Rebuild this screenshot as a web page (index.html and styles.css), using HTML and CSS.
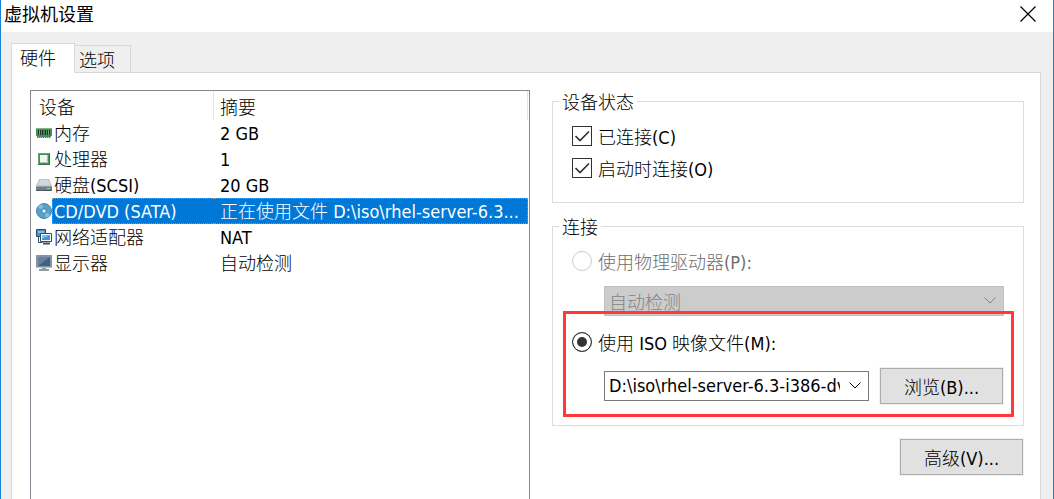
FILE: index.html
```html
<!DOCTYPE html>
<html lang="zh-CN">
<head>
<meta charset="utf-8">
<meta name="viewport" content="width=device-width, initial-scale=1">
<title>虚拟机设置</title>
<link rel="stylesheet" href="styles.css">
</head>
<body>
<div class="window">
  <header class="titlebar">
    <h1 class="title">虚拟机设置</h1>
    <button class="close" type="button" aria-label="关闭">
      <svg width="16" height="16" viewBox="0 0 16 16" fill="none" stroke="#000" stroke-width="1.2"><path d="M.5 .5l15 15M15.500 .5l-15 15"/></svg>
    </button>
  </header>
  <nav class="tabs" role="tablist">
    <button class="tab tab-active" type="button" role="tab" aria-selected="true">硬件</button>
    <button class="tab" type="button" role="tab" aria-selected="false">选项</button>
  </nav>
  <main class="panel">
    <section class="device-list">
      <table class="devices">
        <thead>
          <tr><th class="col-device">设备</th><th>摘要</th></tr>
        </thead>
        <tbody>
          <tr>
            <td><div class="device"><svg class="icon" viewBox="0 0 16 16"><path d="M0 3h16v8h-1v2H1v-2H0z" fill="#3f9150"/><path d="M0 3.500h16" stroke="#7bbd7d"/><path d="M2 5h3v5H2zM6 5h4v5H6zM11 5h3v5h-3z" fill="#26342e"/><path d="M3.500 5v5M8 5v5M12.500 5v5" stroke="#8b958f"/><path d="M2 12.500h13" stroke="#e0c45c" stroke-dasharray="1 1"/></svg><span class="name">内存</span></div></td>
            <td><div class="value"><span class="en">2 GB</span></div></td>
          </tr>
          <tr>
            <td><div class="device"><svg class="icon" viewBox="0 0 16 16"><path d="M2 2h12v12H2z" fill="#2c7d41"/><path d="M2.500 13V2.500H13" fill="none" stroke="#5fa86a"/><path d="M3 3h10v10H3z" fill="#3d9653"/><path d="M4 4h8v8H4z" fill="#f3f4f0"/><path d="M11.500 4v7.500H4" fill="none" stroke="#b4bdb2"/></svg><span class="name">处理器</span></div></td>
            <td><div class="value"><span class="en">1</span></div></td>
          </tr>
          <tr>
            <td><div class="device"><svg class="icon" viewBox="0 0 16 16"><path d="M3 2h10l3 7H0z" fill="#bcc4cb"/><path d="M4 3h8l2 5H2z" fill="#d3d8dc"/><path d="M0 9h16v5H0z" fill="#6d7b8a"/><path d="M0 9.500h16" stroke="#98a3ad"/><path d="M11 11h3v1h-3z" fill="#9be46c"/><path d="M0 13.500h16" stroke="#4d5863"/></svg><span class="name">硬盘<span class="en">(SCSI)</span></span></div></td>
            <td><div class="value"><span class="en">20 GB</span></div></td>
          </tr>
          <tr class="selected">
            <td><div class="device"><svg class="icon" viewBox="0 0 16 16"><circle cx="8" cy="8" r="7.500" fill="#5b9fca" stroke="#4585b0"/><path d="M8 8L2 4a8 8 0 0 1 4-3zM8 8l6 4a8 8 0 0 1-4 3z" fill="#86bedd"/><circle cx="8" cy="8" r="2.500" fill="#a9d5ea" stroke="#3d83b0"/><circle cx="8" cy="8" r="1" fill="#fff"/></svg><span class="name"><span class="en">CD/DVD (SATA)</span></span></div></td>
            <td><div class="value">正在使用文件<span class="en"> D:\iso\rhel-server-6.3...</span></div></td>
          </tr>
          <tr>
            <td><div class="device"><svg class="icon" viewBox="0 0 16 16"><path d="M.5 .5h9v7h-9z" fill="#4c91c1" stroke="#294c6a"/><path d="M2 2h6v2H2z" fill="#83bfe0"/><path d="M2.500 8v5.500h4" fill="none" stroke="#31516c"/><path d="M4.500 4.500h11v8h-11z" fill="#fff" stroke="#294c6a"/><path d="M6 6h8v5H6z" fill="#3d94cf"/><path d="M6 6h8l-8 4z" fill="#76bde7"/><path d="M7 14.500h7" stroke="#31516c" stroke-width="2"/></svg><span class="name">网络适配器</span></div></td>
            <td><div class="value"><span class="en">NAT</span></div></td>
          </tr>
          <tr>
            <td><div class="device"><svg class="icon" viewBox="0 0 16 16"><path d="M0 0h16v13H0z" fill="#8595a6"/><path d="M2 2h12v9H2z" fill="#3f5f83"/><path d="M2 2h12L2 11z" fill="#64829f"/><path d="M6 13h4v1h3v2H3v-2h3z" fill="#8c9aa8"/><path d="M0 12.500h16" stroke="#b3bec8"/></svg><span class="name">显示器</span></div></td>
            <td><div class="value">自动检测</div></td>
          </tr>
        </tbody>
      </table>
    </section>

    <form class="settings">
      <fieldset class="group">
        <legend>设备状态</legend>
        <label class="choice"><input class="check" type="checkbox" checked><span>已连接<span class="en">(C)</span></span></label>
        <label class="choice"><input class="check" type="checkbox" checked><span>启动时连接<span class="en">(O)</span></span></label>
      </fieldset>

      <fieldset class="group">
        <legend>连接</legend>
        <label class="choice muted"><input class="radio" type="radio" name="source" disabled><span>使用物理驱动器<span class="en">(P):</span></span></label>
        <div class="field">
          <div class="combo combo-disabled">
            <select aria-label="物理驱动器" disabled><option>自动检测</option></select>
            <svg class="arrow" viewBox="0 0 12 7" fill="none" stroke="currentColor"><path d="M.5 .5L6 6l5.500-5.500"/></svg>
          </div>
        </div>
        <div class="iso">
          <label class="choice"><input class="radio" type="radio" name="source" checked><span>使用<span class="en"> ISO </span>映像文件<span class="en">(M):</span></span></label>
          <div class="field">
            <div class="combo">
              <select class="en" aria-label="ISO 映像文件"><option>D:\iso\rhel-server-6.3-i386-dvd.iso</option></select>
              <svg class="arrow" viewBox="0 0 12 7" fill="none" stroke="currentColor"><path d="M.5 .5L6 6l5.500-5.500"/></svg>
            </div>
            <button class="button" type="button">浏览<span class="en">(B)...</span></button>
          </div>
          <div class="highlight"></div>
        </div>
      </fieldset>
      <button class="button advanced" type="button">高级<span class="en">(V)...</span></button>
    </form>
  </main>
</div>
</body>
</html>
```
FILE: styles.css
```css
* {
  box-sizing: border-box;
}

body {
  margin: 0;
  color: #000;
  font: 300 18px/22px "Noto Sans CJK SC", sans-serif;
}

button,
select {
  margin: 0;
  border: 0;
  border-radius: 0;
  color: inherit;
  font: inherit;
}

.en {
  font: 400 18px/18px "DejaVu Sans Condensed", "DejaVu Sans", sans-serif;
}

.window {
  display: flex;
  flex-direction: column;
  min-height: 100vh;
  border: solid #1883d7;
  border-width: 0 1px;
  background: #efefef;
}

.titlebar {
  display: flex;
  align-items: center;
  justify-content: space-between;
  height: 32px;
  padding: 0 17px 5px 3px;
  background: #fff;
}

.title {
  margin: 0;
  padding-bottom: 2px;
  font-size: 18px;
  font-weight: 400;
}

.close {
  display: flex;
  padding: 0;
  background: none;
}

.tabs {
  display: flex;
  align-items: flex-end;
  height: 40px;
  padding-left: 10px;
}

.tab {
  height: 27px;
  padding: 0 15px 0 4px;
  border: 1px solid #d9d9d9;
  border-width: 1px 1px 0 0;
  background: #efefef;
}

.tab-active {
  z-index: 1;
  height: 30px;
  margin-bottom: -1px;
  padding: 0 18px 4px 8px;
  border-left-width: 1px;
  background: #fff;
}

.panel {
  display: grid;
  flex: 1;
  grid-template-columns: minmax(0, 500fr) minmax(0, 472fr);
  gap: 22px;
  margin: 0 12px 0 10px;
  padding: 17px 16px 0 18px;
  border: 1px solid #d9d9d9;
  border-bottom: 0;
  background: #fff;
}

.device-list {
  padding-right: 1px;
  border: 1px solid #828790;
  border-bottom: 0;
}

.devices {
  width: 100%;
  border-collapse: separate;
  border-spacing: 0;
  table-layout: fixed;
}

.devices th {
  height: 29px;
  padding: 1px 0 0 6px;
  border-right: 1px solid #e5e5e5;
  font-weight: 300;
  text-align: left;
}

.devices .col-device {
  width: 183px;
  padding-left: 8px;
}

.devices td {
  height: 26px;
  padding: 0;
  overflow: hidden;
  white-space: nowrap;
}

.device {
  display: flex;
  align-items: center;
  padding-left: 5px;
}

.icon {
  flex: none;
  width: 16px;
  height: 16px;
}

.name,
.value {
  height: 26px;
  line-height: 24px;
}

.name {
  flex: 1;
  padding-left: 2px;
}

.value {
  padding-left: 6px;
}

.selected {
  color: #fff;
}

.selected .value,
.selected .name {
  border: dotted #e08030;
  border-width: 1px 0;
  background: #0078d7;
  line-height: 22px;
}

.selected .name {
  padding-left: 1px;
  border-left-width: 1px;
}

.selected .value {
  border-right-width: 1px;
}

.settings {
  display: flex;
  flex-direction: column;
}

.group {
  min-width: 0;
  margin: 0 0 12px;
  padding: 8px 19px 18px;
  border: 1px solid #dcdcdc;
}

.group + .group {
  padding-bottom: 20px;
}

legend {
  margin-left: -13px;
  padding: 0 3px;
}

.choice {
  display: flex;
  align-items: center;
  gap: 6px;
  height: 32px;
}

.muted {
  color: #6d6d6d;
}

.check,
.radio {
  flex: none;
  width: 20px;
  height: 20px;
  margin: 0;
  border: 1px solid #333;
  background: #fff;
  appearance: none;
}

.check:checked {
  background: url("data:image/svg+xml,%3Csvg xmlns='http://www.w3.org/2000/svg' viewBox='0 0 18 18'%3E%3Cpath d='M2.500 9l4.500 4.500 9-9' fill='none' stroke='%23333' stroke-width='1.700'/%3E%3C/svg%3E");
}

.radio {
  border-radius: 50%;
}

.radio:checked {
  background: #333;
  box-shadow: inset 0 0 0 4px #fff;
}

.radio:disabled {
  border-color: #ccc;
}

.field {
  display: flex;
  align-items: center;
  gap: 10px;
  margin: 9px 0 10px 32px;
}

.combo {
  position: relative;
  flex: 1;
  min-width: 0;
  height: 30px;
  border: 1px solid #7a7a7a;
  color: #000;
}

.combo select {
  width: 100%;
  height: 100%;
  padding: 0 28px 0 4px;
  background: #fff;
  opacity: 1;
  appearance: none;
}

.combo-disabled {
  border-color: #bfbfbf;
  color: #838383;
}

.combo-disabled select {
  background: #ccc;
}

.arrow {
  position: absolute;
  top: 10px;
  right: 7px;
  width: 12px;
  height: 7px;
  pointer-events: none;
}

.button {
  width: 123px;
  height: 36px;
  margin: 1px;
  padding: 0;
  border: 1px solid #adadad;
  outline: 1px solid #f0f0f0;
  background: #e1e1e1;
}

.iso {
  position: relative;
}

.iso .field {
  margin-bottom: 0;
}

.highlight {
  position: absolute;
  inset: -15px -10px -12px -9px;
  border: 3px solid #ff3838;
  pointer-events: none;
}

.advanced {
  align-self: flex-end;
}
```
